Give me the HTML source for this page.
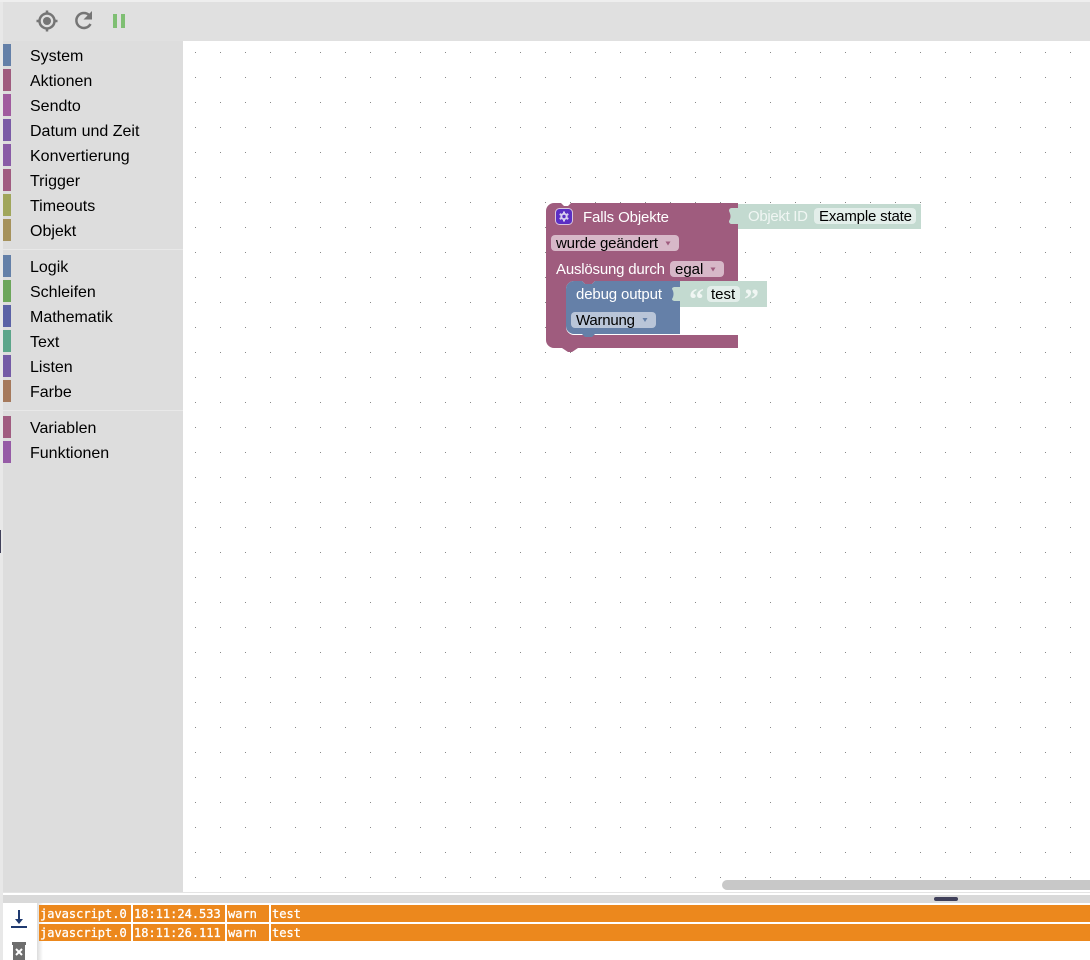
<!DOCTYPE html>
<html><head><meta charset="utf-8"><style>
html,body{margin:0;padding:0;background:#fff;width:1090px;height:960px;overflow:hidden;font-family:"Liberation Sans",sans-serif}
.a{position:absolute}
.bar{position:absolute;left:3px;width:8px;height:22px}
.lab{position:absolute;left:30px;font-size:16px;line-height:22px;color:#000;white-space:nowrap}
.sep{position:absolute;left:3px;width:180px;height:1px;background:#e8e8e8}
.c{position:absolute;height:17px;background:#ec881d;color:#fff;font:normal 12px/19px "DejaVu Sans Mono",monospace;-webkit-text-stroke:.3px #fff;white-space:pre;padding-left:1px;box-sizing:border-box;overflow:hidden}
svg text{font-family:"Liberation Sans",sans-serif;font-size:15px}
</style></head><body>
<div class="a" style="left:0;top:0;width:1090px;height:2px;background:#eee"></div>
<div class="a" style="left:0;top:2px;width:3px;height:958px;background:#e8e8e8"></div>
<div class="a" style="left:3px;top:2px;width:1087px;height:39px;background:#e0e0e0"></div>
<div class="a" style="left:3px;top:41px;width:180px;height:851px;background:#ddd"></div>
<div class="a" style="left:0;top:530px;width:1px;height:23px;background:#40405a"></div>
<svg class="a" style="left:30px;top:5px" width="100" height="32" viewBox="0 0 100 32">
<g fill="none" stroke="#757575" stroke-width="2.500"><circle cx="17" cy="16" r="7.500"/><path d="M17 5.500v3.500M17 23v3.500M6.500 16h3.500M24 16h3.500"/></g><circle cx="17" cy="16" r="4" fill="#757575"/>
<path d="M59.500 10.500A7.500 7.500 0 1 0 60.500 19" fill="none" stroke="#757575" stroke-width="2.500"/><path d="M62 6v8.500h-8.500z" fill="#757575"/>
<rect x="83" y="9" width="4" height="14" fill="#7fbf73"/><rect x="91" y="9" width="4" height="14" fill="#7fbf73"/>
</svg>
<div class="bar" style="top:44px;background:#6480a8"></div><div class="lab" style="top:46px">System</div>
<div class="bar" style="top:69px;background:#9f5c7e"></div><div class="lab" style="top:71px">Aktionen</div>
<div class="bar" style="top:94px;background:#a05b9e"></div><div class="lab" style="top:96px">Sendto</div>
<div class="bar" style="top:119px;background:#7a5ba6"></div><div class="lab" style="top:121px">Datum und Zeit</div>
<div class="bar" style="top:144px;background:#895ba6"></div><div class="lab" style="top:146px">Konvertierung</div>
<div class="bar" style="top:169px;background:#a05c80"></div><div class="lab" style="top:171px">Trigger</div>
<div class="bar" style="top:194px;background:#a0a65b"></div><div class="lab" style="top:196px">Timeouts</div>
<div class="bar" style="top:219px;background:#a6925c"></div><div class="lab" style="top:221px">Objekt</div>
<div class="sep" style="top:249px"></div>
<div class="bar" style="top:255px;background:#6480a8"></div><div class="lab" style="top:257px">Logik</div>
<div class="bar" style="top:280px;background:#6ca65b"></div><div class="lab" style="top:282px">Schleifen</div>
<div class="bar" style="top:305px;background:#5b62a6"></div><div class="lab" style="top:307px">Mathematik</div>
<div class="bar" style="top:330px;background:#5ca58a"></div><div class="lab" style="top:332px">Text</div>
<div class="bar" style="top:355px;background:#745ba6"></div><div class="lab" style="top:357px">Listen</div>
<div class="bar" style="top:380px;background:#a5795c"></div><div class="lab" style="top:382px">Farbe</div>
<div class="sep" style="top:410px"></div>
<div class="bar" style="top:416px;background:#a05c80"></div><div class="lab" style="top:418px">Variablen</div>
<div class="bar" style="top:441px;background:#965ba6"></div><div class="lab" style="top:443px">Funktionen</div>
<svg class="a" style="left:183px;top:41px" width="907" height="839"><defs><pattern id="d" width="25" height="25" patternUnits="userSpaceOnUse" x="12" y="11"><rect width="1" height="1" fill="#888"/></pattern></defs><rect width="907" height="839" fill="url(#d)"/></svg>
<svg class="a" style="left:0;top:0" width="1090" height="892" viewBox="0 0 1090 892">
<path d="M554 203h7l3 3h4l3-3H738V281H595l-3 3h-7l-3-3H574a8 8 0 0 0-8 8V327a8 8 0 0 0 8 8H738V348H578l-6 4h-4l-6-4H554a8 8 0 0 1-8-8V211a8 8 0 0 1 8-8z" fill="#9f5c7e"/>
<path d="M738 204H921V229H738z" fill="#c3dad0"/>
<path d="M739 208h-7c-2 0-3 1-3 3 2 4 2 7 0 10 0 2 1 3 3 3h7z" fill="#c3dad0"/>
<path d="M574 281h8l3 3h7l3-3H680V334H595l-3 3h-7l-3-3H574a8 8 0 0 1-8-8V289a8 8 0 0 1 8-8z" fill="#6580a8"/>
<path d="M680 281H767V307H680z" fill="#c3dad0"/>
<path d="M681 287h-6c-2 0-3 1-3 2 2 3 2 7 0 10 0 1 1 2 3 2h6z" fill="#c3dad0"/>
<rect x="555.500" y="208.500" width="17" height="16" rx="4" fill="#5b2fc4" stroke="#d9c6de"/>
<path d="M564 211.500v10M559.700 214l8.600 5M559.700 219l8.600-5" stroke="#d9d0f0" stroke-width="2"/>
<circle cx="564" cy="216.500" r="3.600" fill="#d9d0f0"/><circle cx="564" cy="216.500" r="1.700" fill="#5b2fc4"/>
<text x="583" y="222" fill="#fff" textLength="86">Falls Objekte</text>
<rect x="551" y="235" width="128" height="16" rx="4" fill="#d7b8c8"/>
<text x="556" y="248" fill="#000" textLength="102">wurde geändert</text><path d="M665.500 241.500h5l-2.500 4z" fill="#9f5c7e"/>
<text x="556" y="274" fill="#fff" textLength="109">Auslösung durch</text>
<rect x="670" y="261" width="54" height="16" rx="4" fill="#d7b8c8"/>
<text x="675" y="274" fill="#000">egal</text><path d="M710.500 267.500h5l-2.500 4z" fill="#9f5c7e"/>
<text x="576" y="299" fill="#fff" textLength="86">debug output</text>
<rect x="571" y="312" width="85" height="16" rx="4" fill="#b9c5d8"/>
<text x="576" y="325" fill="#000" textLength="59">Warnung</text><path d="M642.500 318h5l-2.500 4z" fill="#6580a8"/>
<text x="748" y="221" fill="#f0f6f3" textLength="60">Objekt ID</text>
<rect x="814" y="208" width="102" height="16" rx="4" fill="#e3eeea"/>
<text x="819" y="221" fill="#000" textLength="93">Example state</text>
<text x="689" y="309" fill="#f0f6f3" style="font-family:'Liberation Serif',serif;font-size:30px;font-weight:bold">“</text>
<rect x="707" y="286" width="33" height="16" rx="4" fill="#e3eeea"/>
<text x="711" y="299" fill="#000">test</text>
<text x="744" y="309" fill="#f0f6f3" style="font-family:'Liberation Serif',serif;font-size:30px;font-weight:bold">”</text>
<rect x="722" y="880" width="380" height="10" rx="5" fill="#c8c8c8"/>
</svg>
<div class="a" style="left:3px;top:892px;width:1087px;height:1px;background:#e4e4e4"></div>
<div class="a" style="left:3px;top:895px;width:1087px;height:8px;background:#d9d9d9"></div>
<div class="a" style="left:934px;top:897px;width:24px;height:4px;border-radius:2px;background:#40405a"></div>
<div class="a" style="left:37px;top:903px;width:6px;height:57px;background:linear-gradient(to right,#dcdcdc,#fff)"></div>
<svg class="a" style="left:3px;top:903px" width="34" height="57" viewBox="0 0 34 57">
<path d="M15 7h2v11h-2z" fill="#1f3a70"/><path d="M12 16h8L16 21z" fill="#1f3a70"/><rect x="8" y="23" width="16" height="2" fill="#1f3a70"/>
<rect x="9" y="39" width="14" height="3" fill="#6e6e6e"/><path d="M10 42h12v15H10z" fill="#6e6e6e"/><path d="M13 46l6 6M19 46l-6 6" stroke="#fff" stroke-width="2"/>
</svg>
<div class="c" style="left:39px;top:905px;width:92px">javascript.0</div><div class="c" style="left:133px;top:905px;width:92px">18:11:24.533</div><div class="c" style="left:227px;top:905px;width:42px">warn</div><div class="c" style="left:271px;top:905px;width:819px">test</div>
<div class="c" style="left:39px;top:924px;width:92px">javascript.0</div><div class="c" style="left:133px;top:924px;width:92px">18:11:26.111</div><div class="c" style="left:227px;top:924px;width:42px">warn</div><div class="c" style="left:271px;top:924px;width:819px">test</div>
</body></html>
